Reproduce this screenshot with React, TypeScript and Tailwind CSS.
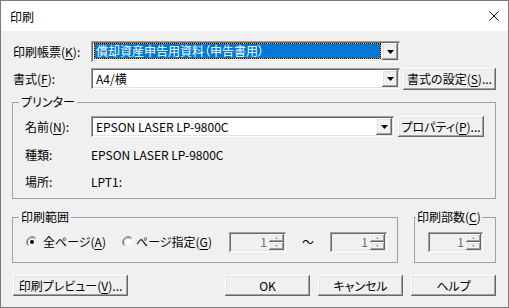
import React from 'react';

// classic 3D edges
const raised =
  'shadow-[inset_-1px_-1px_0_#696969,inset_1px_1px_0_#ffffff,inset_-2px_-2px_0_#a0a0a0,inset_2px_2px_0_#e3e3e3]';
const sunken =
  'shadow-[inset_1px_1px_0_#a0a0a0,inset_-1px_-1px_0_#ffffff,inset_2px_2px_0_#696969,inset_-2px_-2px_0_#e3e3e3]';

function U({ c }: { c: string }) {
  return <span className="underline underline-offset-[2px]">{c}</span>;
}

function Btn({ className, children }: { className: string; children: React.ReactNode }) {
  return (
    <div className={`flex shrink-0 items-center justify-center bg-[#f0f0f0] ${raised} ${className}`}>
      {children}
    </div>
  );
}

function Combo({ w, children }: { w: string; children: React.ReactNode }) {
  return (
    <div className={`flex h-[21px] shrink-0 bg-white p-[2px] ${sunken} ${w}`}>
      <div className="flex min-w-0 flex-1 items-center">{children}</div>
      <div className={`flex w-[16px] items-center justify-center bg-[#f0f0f0] ${raised}`}>
        <svg width="7" height="4" viewBox="0 0 7 4">
          <path d="M0 0h7L3.5 4z" fill="#000" />
        </svg>
      </div>
    </div>
  );
}

function Spin({ w }: { w: string }) {
  return (
    <div className={`flex h-[20px] shrink-0 bg-[#f0f0f0] p-[2px] ${sunken} ${w}`}>
      <div className="flex flex-1 items-center justify-end pr-[2px] text-[#6d6d6d]">1</div>
      <div className="flex w-[15px] flex-col">
        <div className={`flex flex-1 items-center justify-center ${raised}`}>
          <svg width="3" height="2" viewBox="0 0 3 2">
            <path d="M0 2h3L1.5 0z" fill="#a0a0a0" />
          </svg>
        </div>
        <div className={`flex flex-1 items-center justify-center ${raised}`}>
          <svg width="3" height="2" viewBox="0 0 3 2">
            <path d="M0 0h3L1.5 2z" fill="#a0a0a0" />
          </svg>
        </div>
      </div>
    </div>
  );
}

function Radio({ checked }: { checked?: boolean }) {
  return (
    <svg width="12" height="12" viewBox="0 0 12 12" className="shrink-0">
      <circle cx="6" cy="6" r="5" fill="#fff" />
      <path d="M2.11 9.89A5.5 5.5 0 0 1 9.89 2.11" fill="none" stroke="#a0a0a0" />
      <path d="M9.89 2.11A5.5 5.5 0 0 1 2.11 9.89" fill="none" stroke="#ffffff" />
      <path d="M2.82 9.18A4.5 4.5 0 0 1 9.18 2.82" fill="none" stroke="#696969" />
      <path d="M9.18 2.82A4.5 4.5 0 0 1 2.82 9.18" fill="none" stroke="#e3e3e3" />
      {checked && <circle cx="6" cy="6" r="2" fill="#000" />}
    </svg>
  );
}

export default function App() {
  return (
    <div className="flex h-[308px] w-[509px] flex-col overflow-hidden border border-[#7a7a7a] bg-[#f0f0f0] font-['Noto_Sans_CJK_JP',sans-serif] text-[12px] leading-[14px] text-black [font-feature-settings:'palt']">
      <div className="flex h-[30px] shrink-0 items-center justify-between bg-white pl-[9px] pr-[9px]">
        <span className="pt-[2px]">印刷</span>
        <svg width="10" height="10" viewBox="0 0 10 10">
          <path d="M0.5 0.5l9 9M9.5 0.5l-9 9" stroke="#000" strokeWidth="1" />
        </svg>
      </div>

      <div className="flex flex-1 flex-col pl-[11px] pt-[10px]">
        <div className="flex h-[21px] items-center">
          <div className="w-[79px] pl-[1px]">
            印刷帳票(<U c="K" />):
          </div>
          <Combo w="w-[309px]">
            <div className="mx-[1px] mb-[1px] flex h-[16px] flex-1 self-start border border-dotted border-black bg-[#e89a3c]">
              <div className="flex flex-1 items-center bg-[#0078d7] pl-[1px] text-white">
                償却資産申告用資料（申告書用）
              </div>
            </div>
          </Combo>
        </div>

        <div className="mt-[6px] flex items-start">
          <div className="flex h-[21px] w-[79px] items-center pl-[1px]">
            書式(<U c="F" />):
          </div>
          <Combo w="w-[309px]">
            <span className="pl-[3px]">A4/横</span>
          </Combo>
          <Btn className="ml-[3px] h-[22px] w-[93px]">
            書式の設定(<U c="S" />)...
          </Btn>
        </div>

        <fieldset className="mt-[5px] h-[104px] w-[484px] border border-[#a0a0a0]">
          <legend className="ml-[6px] px-[2px]">プリンター</legend>
          <div className="mt-[7px] flex h-[21px] items-center pl-[12px]">
            <div className="w-[66px]">
              名前(<U c="N" />):
            </div>
            <Combo w="w-[303px]">
              <span className="pl-[3px]">EPSON LASER LP-9800C</span>
            </Combo>
            <Btn className="ml-[4px] h-[21px] w-[86px]">
              プロパティ(<U c="P" />)...
            </Btn>
          </div>
          <div className="mt-[7px] flex h-[21px] items-center pl-[12px]">
            <div className="w-[66px]">種類:</div>
            <div>EPSON LASER LP-9800C</div>
          </div>
          <div className="mt-[6px] flex h-[21px] items-center pl-[12px]">
            <div className="w-[66px]">場所:</div>
            <div>LPT1:</div>
          </div>
        </fieldset>

        <div className="mt-[11px] flex w-[484px] justify-between">
          <fieldset className="h-[53px] w-[386px] border border-[#a0a0a0]">
            <legend className="ml-[6px] px-[2px]">印刷範囲</legend>
            <div className="mt-[8px] flex h-[20px] items-center pl-[13px]">
              <Radio checked />
              <div className="ml-[5px] w-[79px]">
                全ページ(<U c="A" />)
              </div>
              <Radio />
              <div className="ml-[2px] w-[93px]">
                ページ指定(<U c="G" />)
              </div>
              <Spin w="w-[57px]" />
              <div className="flex w-[44px] justify-center">～</div>
              <Spin w="w-[57px]" />
            </div>
          </fieldset>

          <fieldset className="h-[53px] w-[82px] border border-[#a0a0a0]">
            <legend className="ml-[1px] px-[1px]">
              印刷部数(<U c="C" />)
            </legend>
            <div className="mt-[8px] flex h-[20px] items-center pl-[13px]">
              <Spin w="w-[55px]" />
            </div>
          </fieldset>
        </div>

        <div className="mt-[12px] flex w-[484px] items-center">
          <Btn className="ml-[1px] h-[21px] w-[115px]">
            印刷プレビュー(<U c="V" />)...
          </Btn>
          <div className="flex-1" />
          <Btn className="h-[21px] w-[85px]">OK</Btn>
          <Btn className="ml-[8px] h-[21px] w-[85px]">キャンセル</Btn>
          <Btn className="ml-[8px] h-[21px] w-[85px]">ヘルプ</Btn>
        </div>
      </div>
    </div>
  );
}
